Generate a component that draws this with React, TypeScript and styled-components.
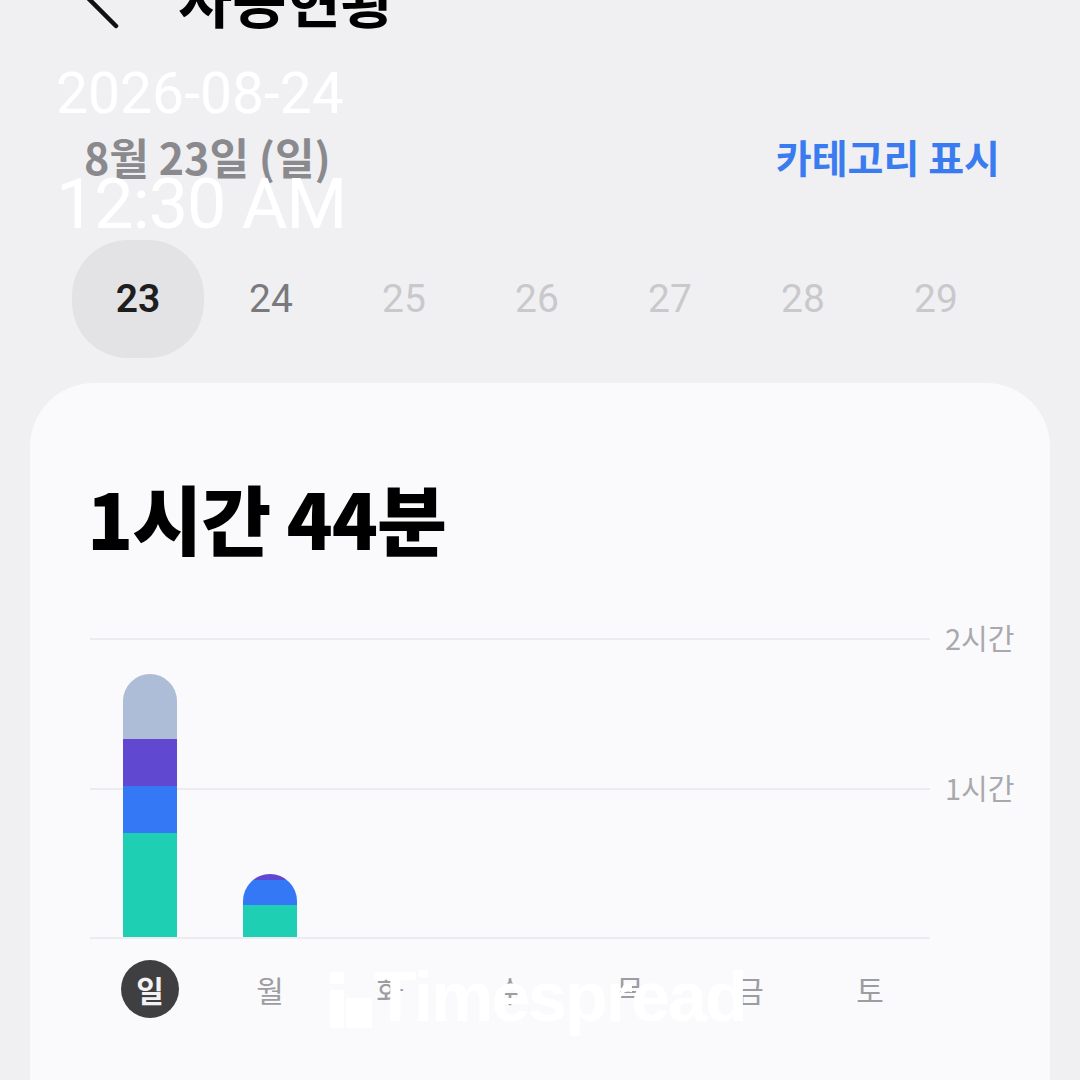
import React from "react";
import styled, { createGlobalStyle } from "styled-components";

const Global = createGlobalStyle`
  html, body { margin: 0; padding: 0; background: #f0f0f3; }
  * { box-sizing: border-box; }
`;

const KR = `"Noto Sans CJK KR", "Noto Sans", sans-serif`;
const NUM = `Roboto, "Noto Sans CJK KR", sans-serif`;

const Page = styled.div`
  position: relative;
  width: 1080px;
  height: 1080px;
  overflow: hidden;
  background: #f0f0f3;
  font-family: ${KR};
`;

const Header = styled.header`
  display: flex;
  align-items: center;
  height: 80px;
  margin-top: -43px;
  padding-left: 80px;
`;

const BackIcon = styled.svg`
  width: 44px;
  height: 70px;
  flex: none;
`;

const Title = styled.h1`
  margin: 0 0 0 54px;
  font-size: 59px;
  line-height: 1;
  font-weight: 700;
  color: #000;
`;

const DateRow = styled.div`
  display: flex;
  align-items: center;
  justify-content: space-between;
  margin-top: 98px;
  padding: 0 80px 0 84px;
`;

const DateLabel = styled.div`
  font-size: 43px;
  line-height: 1;
  font-weight: 700;
  color: #8a8a8e;
`;

const CategoryLink = styled.div`
  font-size: 39px;
  line-height: 1;
  font-weight: 700;
  color: #3a7cf0;
`;

const Strip = styled.div`
  display: flex;
  gap: 1px;
  margin-top: 62px;
  padding-left: 72px;
`;

const DayPill = styled.div<{ $state: "active" | "near" | "far" }>`
  width: 132px;
  height: 118px;
  display: flex;
  align-items: center;
  justify-content: center;
  border-radius: 56px;
  background: ${(p) => (p.$state === "active" ? "#e3e3e6" : "transparent")};
  font-family: ${NUM};
  font-size: 39px;
  font-weight: ${(p) => (p.$state === "active" ? 600 : 400)};
  color: ${(p) =>
    p.$state === "active" ? "#1e1e1e" : p.$state === "near" ? "#7a7a7e" : "#c9c9cc"};
`;

const Card = styled.section`
  margin: 25px 30px 0;
  height: 800px;
  background: #fafafc;
  border-radius: 64px;
  padding: 96px 0 0 60px;
`;

const Total = styled.div`
  margin-left: -3px;
  font-size: 76px;
  line-height: 1;
  font-weight: 800;
  color: #000;
  letter-spacing: -1px;
`;

const Chart = styled.div`
  display: grid;
  grid-template-columns: 840px auto;
  margin-top: 83px;
`;

const Plot = styled.div`
  display: grid;
  grid-template-columns: repeat(7, 120px);
  align-items: end;
  height: 301px;
  background:
    linear-gradient(#ececf0, #ececf0) 0 0 / 100% 2px no-repeat,
    linear-gradient(#ececf0, #ececf0) 0 150px / 100% 2px no-repeat,
    linear-gradient(#ececf0, #ececf0) 0 299px / 100% 2px no-repeat;
  padding-bottom: 2px;
`;

const Bar = styled.div`
  justify-self: center;
  width: 54px;
  display: flex;
  flex-direction: column;
  border-radius: 27px 27px 0 0;
  overflow: hidden;
`;

const Segment = styled.div<{ $color: string }>`
  background: ${(p) => p.$color};
  flex: none;
`;

const YAxis = styled.div`
  display: flex;
  flex-direction: column;
  gap: 120px;
  margin-top: -16px;
  padding-left: 15px;
`;

const YLabel = styled.div`
  height: 30px;
  font-size: 29px;
  line-height: 30px;
  color: #a9a9ad;
  white-space: nowrap;
`;

const DayRow = styled.div`
  display: grid;
  grid-template-columns: repeat(7, 120px);
  margin-top: 21px;
`;

const DayName = styled.div<{ $active?: boolean }>`
  justify-self: center;
  width: 58px;
  height: 58px;
  border-radius: 50%;
  display: flex;
  align-items: center;
  justify-content: center;
  font-size: 30px;
  font-weight: ${(p) => (p.$active ? 700 : 400)};
  background: ${(p) => (p.$active ? "#3f3f41" : "transparent")};
  color: ${(p) => (p.$active ? "#f2f2f2" : "#9d9da1")};
`;

const Stamp = styled.div<{ $top: number; $size: number; $spacing: number }>`
  position: absolute;
  left: 56px;
  top: ${(p) => p.$top}px;
  font-family: ${NUM};
  font-size: ${(p) => p.$size}px;
  line-height: 1;
  font-weight: 400;
  color: #ffffff;
  letter-spacing: ${(p) => p.$spacing}px;
  white-space: nowrap;
`;

const Watermark = styled.div`
  position: absolute;
  left: 330px;
  top: 962px;
  display: flex;
  align-items: flex-end;
  gap: 2px;
  color: #ffffff;
  font-family: "Liberation Sans", Arial, sans-serif;
  font-weight: 700;
  font-size: 70px;
  line-height: 1;
  letter-spacing: -2px;
`;

const WatermarkLogo = styled.svg`
  width: 42px;
  height: 56px;
  flex: none;
  margin-bottom: 4px;
`;

type Seg = { h: number; c: string };

const bars: Seg[][] = [
  [
    { h: 65, c: "#adbcd7" },
    { h: 47, c: "#6148d0" },
    { h: 47, c: "#3478f6" },
    { h: 104, c: "#1ecfb4" },
  ],
  [
    { h: 6, c: "#6148d0" },
    { h: 25, c: "#3478f6" },
    { h: 32, c: "#1ecfb4" },
  ],
  [],
  [],
  [],
  [],
  [],
];

const days = ["일", "월", "화", "수", "목", "금", "토"];
const dates: { n: string; s: "active" | "near" | "far" }[] = [
  { n: "23", s: "active" },
  { n: "24", s: "near" },
  { n: "25", s: "far" },
  { n: "26", s: "far" },
  { n: "27", s: "far" },
  { n: "28", s: "far" },
  { n: "29", s: "far" },
];

export default function App() {
  return (
    <Page>
      <Global />
      <Header>
        <BackIcon viewBox="0 0 44 70">
          <path d="M36 8 L8 36 L36 64" fill="none" stroke="#111" strokeWidth="4.5" strokeLinecap="round" strokeLinejoin="round" />
        </BackIcon>
        <Title>사용현황</Title>
      </Header>

      <DateRow>
        <DateLabel>8월 23일 (일)</DateLabel>
        <CategoryLink>카테고리 표시</CategoryLink>
      </DateRow>

      <Strip>
        {dates.map((d) => (
          <DayPill key={d.n} $state={d.s}>
            {d.n}
          </DayPill>
        ))}
      </Strip>

      <Card>
        <Total>1시간 44분</Total>
        <Chart>
          <Plot>
            {bars.map((segs, i) => (
              <Bar key={i}>
                {segs.map((s, j) => (
                  <Segment key={j} $color={s.c} style={{ height: s.h }} />
                ))}
              </Bar>
            ))}
          </Plot>
          <YAxis>
            <YLabel>2시간</YLabel>
            <YLabel>1시간</YLabel>
          </YAxis>
        </Chart>
        <DayRow>
          {days.map((d, i) => (
            <DayName key={d} $active={i === 0}>
              {d}
            </DayName>
          ))}
        </DayRow>
      </Card>

      <Stamp $top={65} $size={57} $spacing={0}>2026-08-24</Stamp>
      <Stamp $top={169} $size={70} $spacing={-1}>12:30 AM</Stamp>

      <Watermark>
        <WatermarkLogo viewBox="0 0 42 56">
          <rect x="0" y="0" width="14" height="12" rx="3" fill="#fff" />
          <rect x="0" y="18" width="14" height="38" fill="#fff" />
          <rect x="16" y="26" width="26" height="30" fill="#fff" />
        </WatermarkLogo>
        <span>Timespread</span>
      </Watermark>
    </Page>
  );
}
